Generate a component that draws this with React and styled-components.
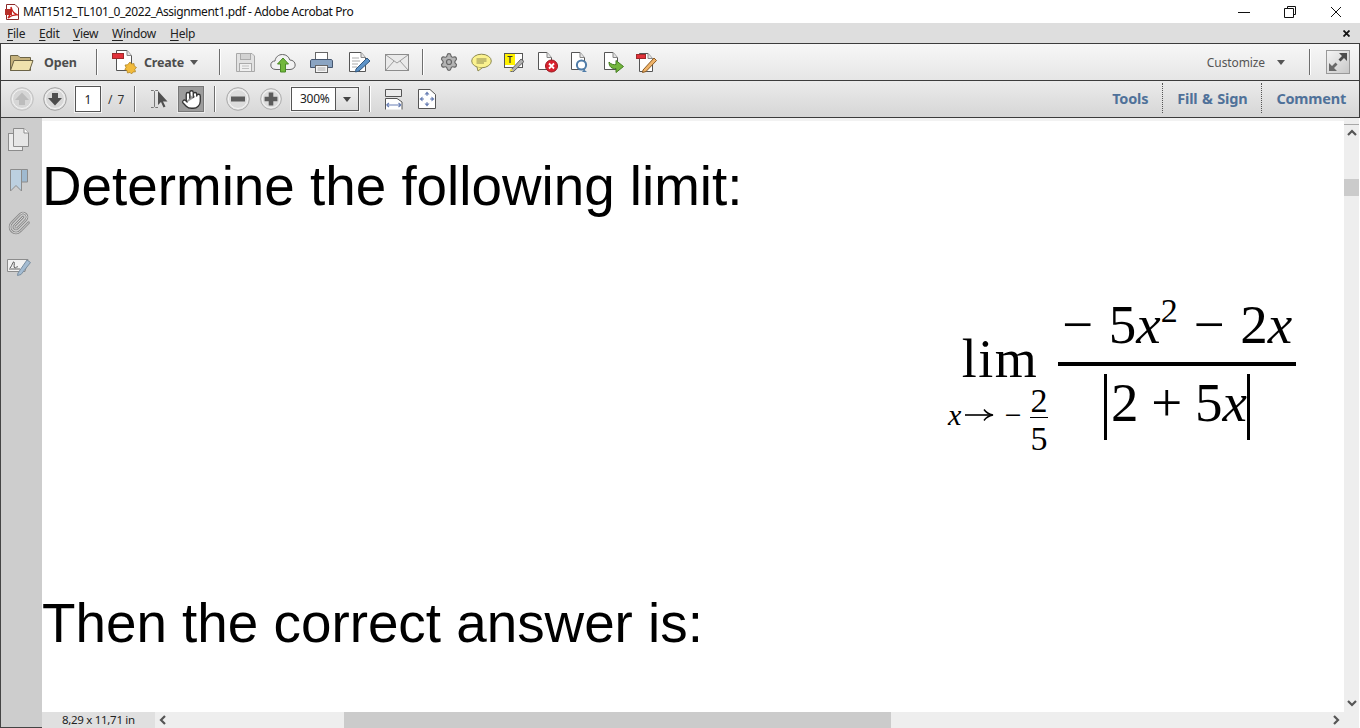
import React from "react";
import styled, { createGlobalStyle } from "styled-components";
import { Hand, Settings } from "lucide-react";

const GlobalStyle = createGlobalStyle`
  html, body {
    margin: 0;
    height: 100%;
    overflow: hidden;
    background: #fff;
  }
  * { box-sizing: border-box; }
`;

const uiFont = `"Noto Sans", "Open Sans", sans-serif`;

const Shell = styled.div`
  width: 1360px;
  height: 728px;
  display: flex;
  flex-direction: column;
  font-family: ${uiFont};
  color: #222;
  overflow: hidden;
`;

const TitleBar = styled.div`
  height: 23px;
  display: flex;
  align-items: center;
  background: #fff;
  padding-left: 5px;
`;

const TitleText = styled.div`
  margin-left: 3px;
  font-size: 12px;
  letter-spacing: -0.4px;
  color: #111;
  white-space: nowrap;
`;

const WindowButtons = styled.div`
  margin-left: auto;
  padding-right: 1px;
  display: flex;
`;

const WindowButton = styled.div`
  width: 46px;
  height: 23px;
  display: flex;
  align-items: center;
  justify-content: center;
`;

const MenuBar = styled.div`
  height: 20px;
  background: #dedede;
  display: flex;
  align-items: center;
  padding: 0 7px;
  font-size: 12px;
  letter-spacing: -0.25px;
  color: #222;
`;

const MenuItem = styled.span`
  width: ${(p) => p.$w}px;
  u { text-underline-offset: 2px; }
`;

const MenuClose = styled.span`
  margin-left: auto;
  margin-right: 3px;
  display: flex;
`;

const ToolBar = styled.div`
  height: 37px;
  display: flex;
  align-items: center;
  border: 1px solid #3c3c3c;
  border-width: 1px 1px 0 1px;
  background: linear-gradient(${(p) => p.$from}, ${(p) => p.$to});
`;

const ToolLabel = styled.span`
  font-size: 12.5px;
  font-weight: 700;
  letter-spacing: -0.2px;
  color: #4d4d4d;
`;

const OpenButton = styled.div`
  width: 95px;
  padding-left: 8px;
  display: flex;
  align-items: center;
  gap: 10px;
`;

const CreateButton = styled.div`
  width: 122px;
  padding-left: 15px;
  display: flex;
  align-items: center;
  gap: 6px;
`;

const Separator = styled.div`
  width: 1px;
  height: ${(p) => p.$h || 26}px;
  background: #6e6e6e;
  box-shadow: 1px 0 0 #fff;
  flex: none;
`;

const IconGroup = styled.div`
  display: flex;
  padding-left: ${(p) => p.$pad}px;
  padding-right: ${(p) => p.$end || 0}px;
`;

const IconSlot = styled.div`
  width: ${(p) => p.$w}px;
  height: 26px;
  display: flex;
  align-items: center;
  justify-content: center;
  flex: none;
`;

const RightTools = styled.div`
  margin-left: auto;
  display: flex;
  align-items: center;
`;

const TabRow = styled(RightTools)`
  margin-bottom: 2px;
`;

const CustomizeLabel = styled.span`
  font-size: 12px;
  letter-spacing: -0.1px;
  color: #555;
  margin-right: 12px;
`;

const FullButton = styled.div`
  width: 24px;
  height: 24px;
  margin: 0 9px 0 16px;
  border: 1px solid #999;
  background: linear-gradient(135deg, #f4f4f4, #c8c8c8);
  display: flex;
  align-items: center;
  justify-content: center;
`;

const PageInput = styled.div`
  width: 26px;
  height: 26px;
  margin-left: 8px;
  background: #fff;
  border: 1px solid #555;
  outline: 1px solid #f4f4f4;
  display: flex;
  align-items: center;
  justify-content: center;
  font-size: 12px;
`;

const PageCount = styled.span`
  width: 33px;
  padding-left: 7px;
  font-size: 12px;
  word-spacing: 2px;
  color: #333;
  white-space: pre;
`;

const HandButton = styled.div`
  width: 26px;
  height: 26px;
  background: #9c9c9c;
  border: 1px solid #777;
  outline: 1px solid #ececec;
  display: flex;
  align-items: center;
  justify-content: center;
`;

const ZoomBox = styled.div`
  width: 68px;
  height: 24px;
  margin-left: 9px;
  margin-right: 10px;
  display: flex;
  background: #fff;
  border: 1px solid #555;
  outline: 1px solid #f4f4f4;
`;

const ZoomValue = styled.div`
  flex: 1;
  font-size: 12px;
  letter-spacing: -0.3px;
  padding-left: 8px;
  line-height: 22px;
  border-right: 1px solid #555;
`;

const ZoomCaret = styled.div`
  width: 22px;
  display: flex;
  align-items: center;
  justify-content: center;
  background: linear-gradient(#f0f0f0, #dcdcdc);
`;

const PanelTab = styled.div`
  height: 30px;
  display: flex;
  align-items: center;
  padding: 0 ${(p) => p.$end || 14}px 0 14px;
  font-size: 14.5px;
  font-weight: 700;
  letter-spacing: -0.2px;
  word-spacing: 1px;
  color: #4f7199;
  border-left: ${(p) => (p.$first ? "none" : "1px dotted #555")};
`;

const Body = styled.div`
  flex: 1;
  display: flex;
  min-height: 0;
  border-top: 1px solid #3c3c3c;
`;

const SideRail = styled.div`
  width: 42px;
  flex: none;
  background: #cdcdcd;
  border-left: 1px solid #444;
  border-bottom: 1px solid #444;
  display: flex;
  flex-direction: column;
  align-items: center;
  padding: 4px 5px 0 0;
`;

const RailIcon = styled.div`
  height: ${(p) => p.$h}px;
  display: flex;
  align-items: center;
  justify-content: center;
`;

const Viewer = styled.div`
  flex: 1;
  min-width: 0;
  display: flex;
  flex-direction: column;
`;

const Page = styled.div`
  flex: 1;
  background: #fff;
  border-top: 3px solid #f2f2f2;
  font-family: "Liberation Sans", Arial, sans-serif;
  color: #000;
  overflow: hidden;
`;

const Heading = styled.div`
  font-size: 54.8px;
  line-height: 64px;
  white-space: nowrap;
  margin-top: ${(p) => p.$top}px;
`;

const Formula = styled.div`
  margin-top: 77px;
  height: 296px;
  padding-right: 48px;
  display: flex;
  justify-content: flex-end;
  align-items: flex-start;
  font-family: "Liberation Serif", "Times New Roman", serif;
`;

const LimitBlock = styled.div`
  width: 100px;
  margin: 34px 10px 0 0;
  display: flex;
  flex-direction: column;
  align-items: center;
`;

const LimWord = styled.div`
  font-size: 54px;
  line-height: 60px;
  letter-spacing: 1.5px;
  margin-left: 4px;
`;

const LimitSub = styled.div`
  align-self: stretch;
  margin-top: -7px;
  display: flex;
  align-items: center;
  justify-content: space-between;
  font-size: 30px;
  white-space: pre;
`;

const LimitArrow = styled.div`
  display: flex;
  align-items: center;
  gap: 3px;
  margin-bottom: 8px;
`;

const MiniFraction = styled.div`
  width: 18px;
  display: flex;
  flex-direction: column;
  align-items: center;
  font-size: 34px;
  line-height: 35px;
`;

const MiniTop = styled.div`
  width: 100%;
  height: 36px;
  line-height: 37px;
  text-align: center;
  border-bottom: 1px solid #000;
`;

const MiniBottom = styled.div`
  margin-top: 3px;
`;

const Fraction = styled.div`
  width: 238px;
  display: flex;
  flex-direction: column;
  align-items: center;
  font-size: 55px;
`;

const Numerator = styled.div`
  line-height: 59px;
  height: 60px;
  word-spacing: 2px;
  white-space: pre;
`;

const FractionRule = styled.div`
  width: 100%;
  height: 4px;
  margin: 7px 0 8px;
  background: #000;
`;

const Denominator = styled.div`
  height: 66px;
  line-height: 57px;
  padding: 0 0 0 4px;
  word-spacing: -1px;
  border-left: 3px solid #000;
  border-right: 3px solid #000;
  white-space: pre;
`;

const Var = styled.i`
  font-style: italic;
`;

const Power = styled.span`
  font-size: 34px;
  line-height: 0;
  position: relative;
  top: -21px;
`;

const BottomBar = styled.div`
  height: 16px;
  flex: none;
  display: flex;
  align-items: center;
  background: #eee;
`;

const SizeLabel = styled.div`
  width: 113px;
  height: 16px;
  background: #e0e0e0;
  padding-left: 20px;
  font-size: 11.5px;
  line-height: 16px;
  letter-spacing: -0.3px;
  color: #222;
  flex: none;
`;

const HTrack = styled.div`
  flex: 1;
  height: 16px;
  display: flex;
  align-items: center;
`;

const HThumb = styled.div`
  width: 547px;
  height: 16px;
  margin-left: 173px;
  background: #cbcbcb;
`;

const Arrow = styled.div`
  width: 16px;
  height: 16px;
  flex: none;
  display: flex;
  align-items: center;
  justify-content: center;
  margin-left: ${(p) => (p.$right ? "auto" : "0")};
`;

const VScroll = styled.div`
  width: 16px;
  flex: none;
  background: #eee;
  display: flex;
  flex-direction: column;
  border-right: 1px solid #fff;
`;

const VCap = styled.div`
  height: 7px;
  border-bottom: 1px solid #a8a8a8;
`;

const VThumb = styled.div`
  height: 17px;
  margin-top: 38px;
  background: #cbcbcb;
`;

const VArrow = styled.div`
  height: 16px;
  display: flex;
  align-items: center;
  justify-content: center;
  margin-top: ${(p) => (p.$bottom ? "auto" : "0")};
  margin-bottom: ${(p) => (p.$bottom ? "17px" : "0")};
`;

// all toolbar glyphs below are drawn by hand

const Svg = ({ w = 24, h = 24, children }) => (
  <svg width={w} height={h} viewBox={`0 0 ${w} ${h}`} fill="none">
    {children}
  </svg>
);

const Chevron = ({ dir }) => {
  const rot = { up: 0, right: 90, down: 180, left: 270 }[dir];
  return (
    <svg width="10" height="10" viewBox="0 0 10 10" style={{ transform: `rotate(${rot}deg)` }}>
      <path d="M1 7 L5 3 L9 7" fill="none" stroke="#555" strokeWidth="2.2" />
    </svg>
  );
};

const Caret = ({ color = "#555" }) => (
  <svg width="8" height="5" viewBox="0 0 8 5">
    <path d="M0 0H8L4 5Z" fill={color} />
  </svg>
);

const DocShape = ({ x = 2, y = 1, w = 15, h = 20 }) => (
  <g>
    <path
      d={`M${x + 0.5} ${y + 0.5}H${x + w - 5}L${x + w - 0.5} ${y + 5.5}V${y + h - 0.5}H${x + 0.5}Z`}
      fill="#fff"
      stroke="#555"
    />
    <path d={`M${x + w - 5} ${y + 0.5}V${y + 5.5}H${x + w - 0.5}`} fill="#e4e4e4" stroke="#888" />
  </g>
);

const PdfIcon = () => (
  <Svg w={15} h={16}>
    <path d="M1.5.5H10L13.5 4V15.5H1.5Z" fill="#fff" stroke="#8a2a2a" />
    <path d="M0 5H7V11H0Z" fill="#b5302a" />
    <path
      d="M3 14C5 11 6.5 8 6 3C7 7 9 10 13 11C9 10.5 6 11.5 3 14Z"
      fill="none"
      stroke="#c8201c"
      strokeWidth="1.2"
    />
  </Svg>
);

const FolderIcon = () => (
  <Svg w={25} h={21}>
    <path d="M1.5 3.5H9L11 5.5H21.5V18.5H1.5Z" fill="#c6b27c" stroke="#6b6346" />
    <path d="M1.5 18.5L5 8.5H24L20.5 18.5Z" fill="#f0e2ad" stroke="#6b6346" />
  </Svg>
);

const CreateIcon = () => (
  <Svg w={26} h={26}>
    <DocShape x={4} y={1} w={16} h={21} />
    <rect x="0.5" y="4.5" width="11" height="5" fill="#e2313a" stroke="#9c2a2a" />
    <path
      d="M18 13L19.5 15L22 14.5L22.3 17L24.5 18.5L22.8 20.3L23.5 22.8L21 23L19.5 25L18 23.3L15.5 24L15 21.5L12.8 20.5L14 18.5L13 16L15.5 15.8Z"
      fill="#f2bb3c"
      stroke="#a87c1c"
      strokeWidth="0.7"
    />
  </Svg>
);

const SaveIcon = () => (
  <Svg w={21} h={21}>
    <path d="M1.5 1.5H17L19.5 4V19.5H1.5Z" fill="#e2e2e2" stroke="#a8a8a8" />
    <rect x="5.5" y="1.5" width="10" height="6" fill="#d2d2d2" stroke="#aaa" />
    <rect x="4.5" y="11.5" width="12" height="8" fill="#f0f0f0" stroke="#aaa" />
    <path d="M7 14H14M7 16.5H14" stroke="#c0c0c0" />
  </Svg>
);

const CloudIcon = () => (
  <Svg w={26} h={21}>
    <path
      d="M6 17.5C2.5 17.5 .8 15.5 .8 13C.8 10.5 2.6 9 5 9C5.5 5 8.5 2.5 12.5 2.5C16.5 2.5 19 5 19.8 8C23 8 25.2 10.2 25.2 13C25.2 15.5 23 17.5 20 17.5Z"
      fill="#f2f2f2"
      stroke="#666"
    />
    <path d="M13 6L18.5 12H15.5V20H10.5V12H7.5Z" fill="#72b83c" stroke="#4a8a26" />
  </Svg>
);

const PrintIcon = () => (
  <Svg w={23} h={23}>
    <rect x="5.5" y="1.5" width="12" height="7" fill="#fff" stroke="#666" />
    <path d="M2 8.5H21C21.8 8.5 22.5 9.2 22.5 10V16.5H.5V10C.5 9.2 1.2 8.5 2 8.5Z" fill="#8aa4c2" stroke="#46566e" />
    <rect x="5.5" y="14.5" width="12" height="7" fill="#f4f4f4" stroke="#666" />
    <path d="M7.5 17H15.5M7.5 19H15.5" stroke="#aaa" />
  </Svg>
);

const EditDocIcon = () => (
  <Svg w={23} h={21}>
    <DocShape x={1} y={0} w={17} h={20} />
    <path d="M4 6H11M4 9H12M4 12H10M4 15H9" stroke="#aaa" />
    <path d="M8 17L19 6L22 9L11 19L7.5 20Z" fill="#5d93c8" stroke="#34587e" />
  </Svg>
);

const MailIcon = () => (
  <Svg w={24} h={17}>
    <rect x="0.5" y="0.5" width="23" height="16" fill="#eaeaea" stroke="#8c8c8c" />
    <path d="M1 1L12 9L23 1M1 16L9 7M23 16L15 7" stroke="#9c9c9c" />
  </Svg>
);

const CommentIcon = () => (
  <Svg w={21} h={19}>
    <ellipse cx="10.5" cy="8" rx="9.8" ry="6.8" fill="#fbf28e" stroke="#8e8a50" />
    <path d="M6 14L7 18L11 15" fill="#fbf28e" stroke="#8e8a50" />
    <path d="M5.5 6H15.5M5.5 8H15.5M5.5 10H13" stroke="#8e8a50" />
  </Svg>
);

const TextMarkIcon = () => (
  <Svg w={21} h={19}>
    <rect x="0.5" y="0.5" width="18" height="14" fill="#fff" stroke="#555" />
    <rect x="1" y="1" width="10" height="11" fill="#fff200" />
    <path d="M3.5 3.5H8.5M6 3.5V10" stroke="#333" strokeWidth="1.2" />
    <path d="M6 18L17 6L20 8.5L9 19Z" fill="#b0b0b0" stroke="#666" />
    <path d="M5.5 18.5L7 15.5L9 17.5Z" fill="#f4e04a" />
  </Svg>
);

const RejectDocIcon = () => (
  <Svg w={21} h={21}>
    <DocShape x={1} y={0} w={14} h={18} />
    <circle cx="14.5" cy="14" r="6" fill="#d9212e" stroke="#98181e" />
    <path d="M12 11.5L17 16.5M17 11.5L12 16.5" stroke="#fff" strokeWidth="1.8" />
  </Svg>
);

const ScanDocIcon = () => (
  <Svg w={21} h={21}>
    <DocShape x={1} y={0} w={14} h={18} />
    <circle cx="11.5" cy="13" r="4.6" fill="#fff" stroke="#4f7ca8" strokeWidth="2" />
    <path d="M14 17.5L17 20H12Z" fill="#4f7ca8" />
  </Svg>
);

const SendDocIcon = () => (
  <Svg w={21} h={21}>
    <DocShape x={1} y={0} w={14} h={18} />
    <path d="M6 10C6 15 9 17 13 16.5V20.5L20.5 14.5L13 8.5V12.5C11 13 8 12.5 6 10Z" fill="#73b63c" stroke="#447d22" />
  </Svg>
);

const MarkupDocIcon = () => (
  <Svg w={21} h={21}>
    <DocShape x={3} y={1} w={14} h={19} />
    <rect x="0.5" y="2.5" width="9" height="4" fill="#e2313a" stroke="#9c2a2a" />
    <path d="M7 18L18 6L20.5 8.5L10 19.5L6.5 20.5Z" fill="#f0b46a" stroke="#8a5a24" />
  </Svg>
);

const ArrowCircle = ({ dim, down }) => (
  <Svg w={24} h={24}>
    <circle cx="12" cy="12" r="11.3" fill={dim ? "#dcdcdc" : "#e4e4e4"} stroke={dim ? "#c0c0c0" : "#a0a0a0"} />
    <circle cx="12" cy="12" r="9.5" fill={dim ? "#d6d6d6" : "#d8d8d8"} stroke="#f4f4f4" />
    <path
      d={down ? "M9 6H15V11H19L12 18.5L5 11H9Z" : "M9 18H15V13H19L12 5.5L5 13H9Z"}
      fill={dim ? "#bcbcbc" : "#4c4c4c"}
    />
  </Svg>
);

const SignCircle = ({ plus }) => (
  <Svg w={24} h={24}>
    <circle cx="12" cy="12" r="11.3" fill="#e4e4e4" stroke="#a8a8a8" />
    <circle cx="12" cy="12" r="9.5" fill="#dcdcdc" stroke="#f4f4f4" />
    <path d={plus ? "M9.5 5H14.5V9.5H19V14.5H14.5V19H9.5V14.5H5V9.5H9.5Z" : "M5 9.5H19V14.5H5Z"} fill="#5c5c5c" />
  </Svg>
);

const SelectIcon = () => (
  <Svg w={19} h={20}>
    <path d="M1 1.5H3.5L4.5 2.5L5.5 1.5H8M4.5 2.5V17.5M1 18.5H3.5L4.5 17.5L5.5 18.5H8" stroke="#777" />
    <path d="M8 2V16L11 13L13.5 18.5L15.5 17.5L13 12.5H17.5Z" fill="#505050" />
  </Svg>
);

const FitWidthIcon = () => (
  <Svg w={18} h={21}>
    <path d="M.5 7.5V.5H16.5V7.5Z" fill="#ececec" stroke="#555" />
    <path d="M.5 20.5V9.5H12L17 13V20.5" fill="#fff" stroke="#555" />
    <path d="M1.5 16H16M1.5 16L4 14M1.5 16L4 18M16 16L13.5 14M16 16L13.5 18" stroke="#6a80b5" strokeWidth="1.2" />
  </Svg>
);

const FitPageIcon = () => (
  <Svg w={18} h={20}>
    <path d="M.5 .5H12L17.5 5.5V19.5H.5Z" fill="#fff" stroke="#555" />
    <path
      d="M9 2.5L6.5 5.5H11.5ZM9 17.5L6.5 14.5H11.5ZM1.5 10L4.5 7.5V12.5ZM16.5 10L13.5 7.5V12.5Z"
      fill="#6a80b5"
    />
    <path d="M9 5V7M9 13V15M4 10H6M12 10H14" stroke="#6a80b5" />
  </Svg>
);

const ExpandIcon = () => (
  <Svg w={20} h={20}>
    <path d="M19 1V9L16 6L12.5 9.5L10.5 7.5L14 4L11 1Z" fill="#4c4c4c" />
    <path d="M1 19V11L4 14L7.5 10.5L9.5 12.5L6 16L9 19Z" fill="#6a6a6a" />
  </Svg>
);

const PagesIcon = () => (
  <Svg w={22} h={24}>
    <rect x="0.5" y="5.5" width="14" height="17" fill="#ececec" stroke="#8c8c8c" />
    <path d="M5.5 .5H16L20.5 5V18.5H5.5Z" fill="#e6e6e6" stroke="#8c8c8c" />
    <path d="M16 .5V5H20.5" fill="#fff" stroke="#8c8c8c" />
  </Svg>
);

const BookmarkIcon = () => (
  <Svg w={20} h={24}>
    <path d="M12 1.5H18.5V14H12Z" fill="#9fb9cf" stroke="#8c8c8c" />
    <path d="M1.5 1.5H12.5V23L7 17.5L1.5 23Z" fill="#bcd0e0" stroke="#8c8c8c" />
  </Svg>
);

const clipPath =
  "m16 6-8.414 8.586a2 2 0 0 0 2.829 2.828l8.414-8.586a4 4 0 1 0-5.657-5.657l-8.379 8.551a6 6 0 1 0 8.485 8.485l8.379-8.551";

const ClipIcon = () => (
  <Svg w={24} h={24}>
    <path d={clipPath} stroke="#8a8a8a" strokeWidth="2.6" strokeLinecap="round" />
    <path d={clipPath} stroke="#d8d8d8" strokeWidth="1" strokeLinecap="round" />
  </Svg>
);

const SignIcon = () => (
  <Svg w={24} h={20}>
    <path d="M.5 3.5H21L18 15.5H.5Z" fill="#f2f2f2" stroke="#8c8c8c" />
    <path d="M3 12C5 10 6 5 7 6C8 7 6 12 8 12C9 12 10 10 11 11" stroke="#555" />
    <path d="M2 13H13" stroke="#666" />
    <path d="M11 17L20 4L23.5 6.5L14 18.5L10.5 19.5Z" fill="#a4bcd2" stroke="#7a8ea0" />
  </Svg>
);

const LongArrow = () => (
  <Svg w={30} h={16}>
    <path d="M1 8H27" stroke="#000" strokeWidth="1.6" />
    <path d="M20 2.5C22 5.5 25 7.2 29 8C25 8.8 22 10.5 20 13.5" stroke="#000" strokeWidth="1.4" />
  </Svg>
);

const tools = [
  <SaveIcon key="save" />,
  <CloudIcon key="cloud" />,
  <PrintIcon key="print" />,
  <EditDocIcon key="edit" />,
  <MailIcon key="mail" />,
];

const docTools = [
  <Settings key="gear" size={20} color="#666" fill="#b4b4b4" strokeWidth={1.4} />,
  <CommentIcon key="comment" />,
  <TextMarkIcon key="mark" />,
  <RejectDocIcon key="reject" />,
  <ScanDocIcon key="scan" />,
  <SendDocIcon key="send" />,
  <MarkupDocIcon key="markup" />,
];

const menus = [
  ["F", "ile", 32],
  ["E", "dit", 34],
  ["V", "iew", 39],
  ["W", "indow", 58],
  ["H", "elp", 40],
];

export default function App() {
  return (
    <Shell>
      <GlobalStyle />
      <TitleBar>
        <PdfIcon />
        <TitleText>MAT1512_TL101_0_2022_Assignment1.pdf - Adobe Acrobat Pro</TitleText>
        <WindowButtons>
          <WindowButton>
            <Svg w={12} h={12}>
              <path d="M0 6.5H12" stroke="#111" />
            </Svg>
          </WindowButton>
          <WindowButton>
            <Svg w={12} h={12}>
              <path d="M3.5 2.5V.5H11.5V8.5H9.5M.5 2.5H9.5V11.5H.5Z" stroke="#111" />
            </Svg>
          </WindowButton>
          <WindowButton>
            <Svg w={12} h={12}>
              <path d="M1 1L11 11M11 1L1 11" stroke="#111" />
            </Svg>
          </WindowButton>
        </WindowButtons>
      </TitleBar>

      <MenuBar>
        {menus.map(([key, rest, w]) => (
          <MenuItem key={key} $w={w}>
            <u>{key}</u>
            {rest}
          </MenuItem>
        ))}
        <MenuClose>
          <Svg w={7} h={7}>
            <path d="M.5 .5L6.5 6.5M6.5 .5L.5 6.5" stroke="#111" strokeWidth="1.8" />
          </Svg>
        </MenuClose>
      </MenuBar>

      <ToolBar $from="#f7f7f7" $to="#e6e6e6">
        <OpenButton>
          <FolderIcon />
          <ToolLabel>Open</ToolLabel>
        </OpenButton>
        <Separator />
        <CreateButton>
          <CreateIcon />
          <ToolLabel>Create</ToolLabel>
          <Caret />
        </CreateButton>
        <Separator />
        <IconGroup $pad={6} $end={6}>
          {tools.map((icon) => (
            <IconSlot key={icon.key} $w={38}>
              {icon}
            </IconSlot>
          ))}
        </IconGroup>
        <Separator />
        <IconGroup $pad={9}>
          {docTools.map((icon) => (
            <IconSlot key={icon.key} $w={33}>
              {icon}
            </IconSlot>
          ))}
        </IconGroup>
        <RightTools>
          <CustomizeLabel>Customize</CustomizeLabel>
          <Caret />
          <IconSlot $w={24} />
          <Separator />
          <FullButton>
            <ExpandIcon />
          </FullButton>
        </RightTools>
      </ToolBar>

      <ToolBar $from="#ebebeb" $to="#d6d6d6">
        <IconGroup $pad={9}>
          <IconSlot $w={24}>
            <ArrowCircle dim />
          </IconSlot>
        </IconGroup>
        <IconGroup $pad={9}>
          <IconSlot $w={24}>
            <ArrowCircle down />
          </IconSlot>
        </IconGroup>
        <PageInput>1</PageInput>
        <PageCount>/ 7</PageCount>
        <Separator />
        <IconGroup $pad={5}>
          <IconSlot $w={38}>
            <SelectIcon />
          </IconSlot>
        </IconGroup>
        <HandButton>
          <Hand size={21} color="#333" fill="#fff" strokeWidth={1.5} />
        </HandButton>
        <IconSlot $w={10} />
        <Separator />
        <IconSlot $w={45}>
          <SignCircle />
        </IconSlot>
        <IconSlot $w={22}>
          <SignCircle plus />
        </IconSlot>
        <ZoomBox>
          <ZoomValue>300%</ZoomValue>
          <ZoomCaret>
            <Caret color="#444" />
          </ZoomCaret>
        </ZoomBox>
        <Separator />
        <IconGroup $pad={7}>
          <IconSlot $w={33}>
            <FitWidthIcon />
          </IconSlot>
          <IconSlot $w={33}>
            <FitPageIcon />
          </IconSlot>
        </IconGroup>
        <TabRow>
          <PanelTab $first>Tools</PanelTab>
          <PanelTab>Fill &amp; Sign</PanelTab>
          <PanelTab $end={13}>Comment</PanelTab>
        </TabRow>
      </ToolBar>

      <Body>
        <SideRail>
          <RailIcon $h={36}>
            <PagesIcon />
          </RailIcon>
          <RailIcon $h={43}>
            <BookmarkIcon />
          </RailIcon>
          <RailIcon $h={43}>
            <ClipIcon />
          </RailIcon>
          <RailIcon $h={44}>
            <SignIcon />
          </RailIcon>
        </SideRail>

        <Viewer>
          <Page>
            <Heading $top={33}>Determine the following limit:</Heading>
            <Formula>
              <LimitBlock>
                <LimWord>lim</LimWord>
                <LimitSub>
                  <LimitArrow>
                    <Var>x</Var>
                    <LongArrow />
                    <span> −</span>
                  </LimitArrow>
                  <MiniFraction>
                    <MiniTop>2</MiniTop>
                    <MiniBottom>5</MiniBottom>
                  </MiniFraction>
                </LimitSub>
              </LimitBlock>
              <Fraction>
                <Numerator>
                  − 5<Var>x</Var>
                  <Power>2</Power> − 2<Var>x</Var>
                </Numerator>
                <FractionRule />
                <Denominator>
                  2 + 5<Var>x</Var>
                </Denominator>
              </Fraction>
            </Formula>
            <Heading>Then the correct answer is:</Heading>
          </Page>
          <BottomBar>
            <SizeLabel>8,29 x 11,71 in</SizeLabel>
            <HTrack>
              <Arrow>
                <Chevron dir="left" />
              </Arrow>
              <HThumb />
              <Arrow $right>
                <Chevron dir="right" />
              </Arrow>
            </HTrack>
          </BottomBar>
        </Viewer>

        <VScroll>
          <VCap />
          <VArrow>
            <Chevron dir="up" />
          </VArrow>
          <VThumb />
          <VArrow $bottom>
            <Chevron dir="down" />
          </VArrow>
        </VScroll>
      </Body>
    </Shell>
  );
}
